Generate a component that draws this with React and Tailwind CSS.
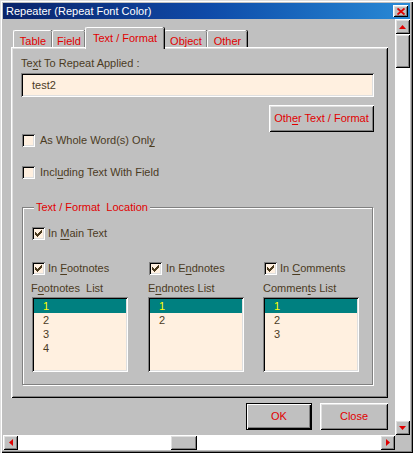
import React from 'react';

const raised =
  'shadow-[inset_1px_1px_0_#fff,inset_-1px_-1px_0_#000,inset_2px_2px_0_#dfdfdf,inset_-2px_-2px_0_#808080]';
const sunken =
  'shadow-[inset_1px_1px_0_#808080,inset_-1px_-1px_0_#fff,inset_2px_2px_0_#000,inset_-2px_-2px_0_#dfdfdf]';

function Key({ children }) {
  return <span className="underline underline-offset-[2px]">{children}</span>;
}

function CheckMark() {
  // classic 7x7 pixel tick
  return (
    <svg width="7" height="7" viewBox="0 0 7 7" shapeRendering="crispEdges" className="fill-[#4b3b1f]">
      <path d="M6 0h1v1h-1z M5 1h2v1h-2z M0 2h1v1h-1z M4 2h3v1h-3z M0 3h2v1h-2z M3 3h3v1h-3z M0 4h5v1h-5z M1 5h3v1h-3z M2 6h1v1h-1z" />
    </svg>
  );
}

function Check({ checked, children, gap = 'gap-[4px]' }) {
  return (
    <div className={`flex items-center h-[13px] ${gap}`}>
      <span className={`w-[13px] h-[13px] shrink-0 bg-[#fff0e0] flex items-center justify-center ${sunken}`}>
        {checked && <CheckMark />}
      </span>
      <span className="leading-[13px] whitespace-pre">{children}</span>
    </div>
  );
}

function ListBox({ items }) {
  return (
    <div className={`w-[96px] h-[75px] bg-[#fff0e0] p-[2px] ${sunken}`}>
      {items.map((it, i) => (
        <div
          key={it}
          className={`h-[14px] leading-[14px] pl-[9px] ${i === 0 ? 'bg-[#008080] text-[#ffff00]' : ''}`}
        >
          {it}
        </div>
      ))}
    </div>
  );
}

function Arrow({ dir }) {
  const d = {
    up: 'M0 4 L3.5 0 L7 4 Z',
    down: 'M0 0 L7 0 L3.5 4 Z',
    left: 'M4 0 L4 7 L0 3.5 Z',
    right: 'M0 0 L4 3.5 L0 7 Z',
  }[dir];
  const vertical = dir === 'up' || dir === 'down';
  return (
    <svg width={vertical ? 7 : 4} height={vertical ? 4 : 7} viewBox={vertical ? '0 0 7 4' : '0 0 4 7'} className="fill-[#e00000]">
      <path d={d} />
    </svg>
  );
}

function ScrollBtn({ dir }) {
  return (
    <div className={`w-[15px] h-[15px] shrink-0 bg-[#c0c0c0] flex items-center justify-center ${raised}`}>
      <Arrow dir={dir} />
    </div>
  );
}

function Tab({ label, active, w }) {
  if (active) {
    return (
      <div
        className={`${w} h-[22px] -mb-[2px] relative z-10 bg-[#c0c0c0] rounded-t-[2px] border-t border-l border-white shadow-[inset_-1px_0_0_#808080,1px_0_0_#000] flex justify-center pt-[2px] text-[#e00000]`}
      >
        {label}
      </div>
    );
  }
  return (
    <div
      className={`${w} h-[17px] bg-[#c0c0c0] rounded-t-[2px] border-t border-l border-white shadow-[inset_-1px_0_0_#808080,1px_0_0_#000] flex justify-center pt-[2px] text-[#e00000]`}
    >
      {label}
    </div>
  );
}

export default function App() {
  return (
    <div
      className={`w-[413px] h-[453px] bg-[#c0c0c0] p-[3px] flex flex-col overflow-hidden font-['Liberation_Sans',Arial,sans-serif] text-[11px] text-[#4b3b1f] shadow-[inset_1px_1px_0_#dfdfdf,inset_2px_2px_0_#fff,inset_-1px_-1px_0_#000,inset_-2px_-2px_0_#808080]`}
    >
      {/* title bar */}
      <div className="h-[16px] shrink-0 flex items-center justify-between pl-[3px] pr-[2px] bg-gradient-to-r from-[#0a246a] via-[#0f4aa8] to-[#2a8ad6]">
        <span className="text-white text-[11px] leading-[16px]">Repeater (Repeat Font Color)</span>
        <div className={`w-[15px] h-[12px] bg-[#c0c0c0] flex items-center justify-center ${raised}`}>
          <svg width="8" height="7" viewBox="0 0 8 7" className="stroke-[#e00000]" strokeWidth="1.8">
            <path d="M0.5 0.5 L7.5 6.5 M7.5 0.5 L0.5 6.5" />
          </svg>
        </div>
      </div>

      {/* client area */}
      <div className="h-[416px] shrink-0 flex">
        <div className="w-[392px] pl-[8px] pt-[8px]">
          {/* tab strip */}
          <div className="h-[20px] flex items-end ml-[2px]">
            <Tab label="Table" w="w-[39px]" />
            <Tab label="Field" w="w-[33px]" />
            <Tab label="Text / Format" w="w-[79px]" active />
            <Tab label="Object" w="w-[43px]" />
            <Tab label="Other" w="w-[40px]" />
          </div>

          {/* tab panel */}
          <div className={`w-[377px] h-[351px] pl-[10px] pt-[10px] flex flex-col ${raised}`}>
            <div className="h-[13px] leading-[13px]">
              Te<Key>x</Key>t To Repeat Applied :
            </div>
            <div className={`mt-[3px] w-[353px] h-[24px] bg-[#fff0e0] pl-[11px] flex items-center ${sunken}`}>
              test2
            </div>
            <div className="w-[353px] flex justify-end mt-[8px]">
              <button className={`w-[105px] h-[27px] bg-[#c0c0c0] text-[#e00000] ${raised}`}>
                Oth<Key>e</Key>r Text / Format
              </button>
            </div>
            <div className="mt-[2px] ml-[1px]">
              <Check gap="gap-[5px]">
                As Whole Word(s) Onl<Key>y</Key>
              </Check>
            </div>
            <div className="mt-[19px] ml-[1px]">
              <Check gap="gap-[5px]">
                Incl<Key>u</Key>ding Text With Field
              </Check>
            </div>

            {/* group box */}
            <div className="mt-[28px] ml-[1px] w-[351px] h-[178px] relative border border-[#808080] shadow-[inset_1px_1px_0_#fff,1px_1px_0_#fff] pl-[9px] pt-[19px]">
              <span className="absolute left-[11px] -top-[7px] px-[2px] bg-[#c0c0c0] leading-[13px] text-[#e00000] whitespace-pre">
                Text / Format  Location
              </span>
              <Check checked gap="gap-[3px]">
                In <Key>M</Key>ain Text
              </Check>
              <div className="mt-[22px] grid grid-cols-[96px_96px_96px] gap-x-[20px]">
                <div className="flex flex-col">
                  <Check checked gap="gap-[3px]">
                    In <Key>F</Key>ootnotes
                  </Check>
                  <div className="mt-[7px] h-[13px] leading-[13px] whitespace-pre -ml-[1px]">
                    F<Key>o</Key>otnotes  List
                  </div>
                  <div className="mt-[2px]">
                    <ListBox items={['1', '2', '3', '4']} />
                  </div>
                </div>
                <div className="flex flex-col">
                  <div className="ml-[1px]">
                    <Check checked gap="gap-[4px]">
                      In E<Key>n</Key>dnotes
                    </Check>
                  </div>
                  <div className="mt-[7px] h-[13px] leading-[13px]">
                    E<Key>n</Key>dnotes List
                  </div>
                  <div className="mt-[2px]">
                    <ListBox items={['1', '2']} />
                  </div>
                </div>
                <div className="flex flex-col">
                  <Check checked gap="gap-[3px]">
                    In <Key>C</Key>omments
                  </Check>
                  <div className="mt-[7px] h-[13px] leading-[13px] -ml-[1px]">
                    Commen<Key>t</Key>s List
                  </div>
                  <div className="mt-[2px] -ml-[1px]">
                    <ListBox items={['1', '2', '3']} />
                  </div>
                </div>
              </div>
            </div>
          </div>

          {/* buttons */}
          <div className="w-[377px] mt-[5px] flex justify-end gap-[8px]">
            <button className="w-[66px] h-[27px] bg-[#c0c0c0] text-[#e00000] border border-black shadow-[inset_1px_1px_0_#fff,inset_-1px_-1px_0_#000,inset_-2px_-2px_0_#808080]">
              OK
            </button>
            <button className={`w-[68px] h-[27px] bg-[#c0c0c0] text-[#e00000] ${raised}`}>Close</button>
          </div>
        </div>

        {/* vertical scrollbar */}
        <div className="w-[15px] flex flex-col bg-white">
          <ScrollBtn dir="up" />
          <div className={`h-[34px] bg-[#c0c0c0] ${raised}`} />
          <div className="flex-1" />
          <ScrollBtn dir="down" />
        </div>
      </div>

      {/* horizontal scrollbar */}
      <div className="h-[15px] shrink-0 flex">
        <div className="w-[392px] flex bg-white">
          <ScrollBtn dir="left" />
          <div className="w-[152px]" />
          <div className={`w-[27px] bg-[#c0c0c0] ${raised}`} />
          <div className="flex-1" />
          <ScrollBtn dir="right" />
        </div>
        <div className="w-[15px] bg-[#c0c0c0]" />
      </div>
    </div>
  );
}
